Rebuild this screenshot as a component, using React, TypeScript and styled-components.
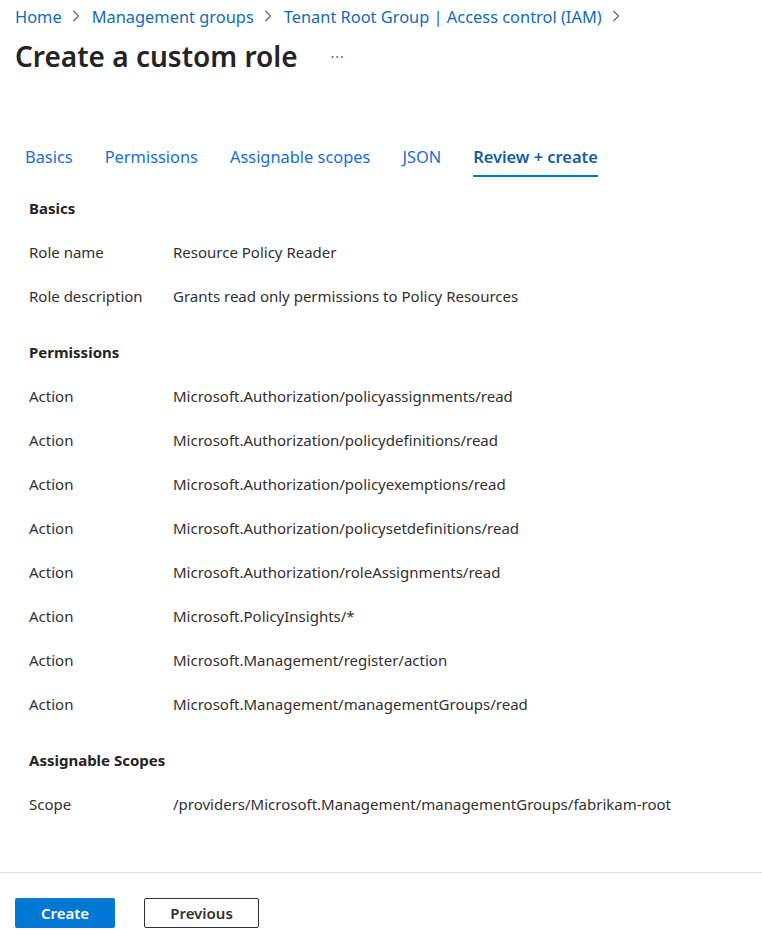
import React from 'react'
import styled, { createGlobalStyle } from 'styled-components'

const GlobalStyle = createGlobalStyle`
  html, body {
    margin: 0;
    padding: 0;
    background: #ffffff;
  }
  body {
    font-family: "Noto Sans", "Open Sans", sans-serif;
    color: #323130;
  }
`

const crumbs = ['Home', 'Management groups', 'Tenant Root Group | Access control (IAM)']
const tabs = ['Basics', 'Permissions', 'Assignable scopes', 'JSON', 'Review + create']

const sections = [
  {
    title: 'Basics',
    rows: [
      ['Role name', 'Resource Policy Reader'],
      ['Role description', 'Grants read only permissions to Policy Resources'],
    ],
  },
  {
    title: 'Permissions',
    rows: [
      ['Action', 'Microsoft.Authorization/policyassignments/read'],
      ['Action', 'Microsoft.Authorization/policydefinitions/read'],
      ['Action', 'Microsoft.Authorization/policyexemptions/read'],
      ['Action', 'Microsoft.Authorization/policysetdefinitions/read'],
      ['Action', 'Microsoft.Authorization/roleAssignments/read'],
      ['Action', 'Microsoft.PolicyInsights/*'],
      ['Action', 'Microsoft.Management/register/action'],
      ['Action', 'Microsoft.Management/managementGroups/read'],
    ],
  },
  {
    title: 'Assignable Scopes',
    rows: [['Scope', '/providers/Microsoft.Management/managementGroups/fabrikam-root']],
  },
]

const Chevron = () => (
  <svg width="8" height="12" viewBox="0 0 8 12">
    <path d="M1.5 1 L6.5 6 L1.5 11" fill="none" stroke="#605e5c" strokeWidth="1.1" />
  </svg>
)

const App = () => {
  return (
    <Page>
      <GlobalStyle />
      <Header>
        <Breadcrumb>
          {crumbs.map((c) => (
            <Crumb key={c}>
              <CrumbLink>{c}</CrumbLink>
              <Chevron />
            </Crumb>
          ))}
        </Breadcrumb>
        <TitleRow>
          <Title>Create a custom role</Title>
          <More>···</More>
        </TitleRow>
      </Header>

      <Tabs>
        {tabs.map((t, i) => (
          <Tab key={t} active={i === tabs.length - 1}>
            {t}
          </Tab>
        ))}
      </Tabs>

      <Content>
        {sections.map((s) => (
          <Section key={s.title}>
            <SectionTitle>{s.title}</SectionTitle>
            {s.rows.map(([label, value], i) => (
              <Row key={i}>
                <Label>{label}</Label>
                <Value>{value}</Value>
              </Row>
            ))}
          </Section>
        ))}
      </Content>

      <Footer>
        <PrimaryButton>Create</PrimaryButton>
        <SecondaryButton>Previous</SecondaryButton>
      </Footer>
    </Page>
  )
}

export default App

const Page = styled.div`
  width: 762px;
  height: 942px;
  display: flex;
  flex-direction: column;
  overflow: hidden;
`

const Header = styled.div`
  padding: 4px 15px 0;
  display: flex;
  flex-direction: column;
`

const Breadcrumb = styled.div`
  display: flex;
  align-items: center;
  height: 24px;
`

const Crumb = styled.div`
  display: flex;
  align-items: center;
  gap: 10px;
  margin-right: 12px;
`

const CrumbLink = styled.span`
  font-size: 16.4px;
  color: #0f6cbd;
`

const TitleRow = styled.div`
  display: flex;
  align-items: center;
  margin-top: 11px;
  height: 34px;
`

const Title = styled.h1`
  margin: 0;
  font-size: 28px;
  font-weight: 600;
  color: #242424;
`

const More = styled.span`
  margin-left: 33px;
  font-size: 14px;
  color: #605e5c;
  letter-spacing: 1px;
`

const Tabs = styled.div`
  display: flex;
  margin-top: 72px;
  padding-left: 9px;
`

const Tab = styled.div<{ active: boolean }>`
  padding: 0 16px;
  height: 32px;
  display: flex;
  align-items: flex-start;
  font-size: 16.4px;
  font-weight: ${(p) => (p.active ? 600 : 400)};
  color: ${(p) => (p.active ? '#115ea3' : '#1a6ddb')};
  position: relative;

  &::after {
    content: '';
    display: ${(p) => (p.active ? 'block' : 'none')};
    position: absolute;
    left: 16px;
    right: 16px;
    bottom: 0;
    height: 2px;
    background: #0078d4;
  }
`

const Content = styled.div`
  flex: 1;
  padding: 19px 29px 0;
  display: flex;
  flex-direction: column;
  gap: 12px;
`

const Section = styled.div`
  display: flex;
  flex-direction: column;
`

const SectionTitle = styled.div`
  font-size: 15px;
  font-weight: 700;
  height: 44px;
  line-height: 24px;
  color: #242424;
`

const Row = styled.div`
  display: flex;
  height: 44px;
  line-height: 24px;
  font-size: 15px;
`

const Label = styled.div`
  width: 144px;
  flex-shrink: 0;
  color: #323130;
`

const Value = styled.div`
  color: #323130;
`

const Footer = styled.div`
  border-top: 1px solid #e0e0e0;
  height: 70px;
  padding: 25px 15px 0;
  box-sizing: border-box;
  display: flex;
  gap: 29px;
  align-items: flex-start;
`

const PrimaryButton = styled.button`
  width: 100px;
  height: 30px;
  border: none;
  border-radius: 2px;
  background: #0078d4;
  color: #ffffff;
  font-family: inherit;
  font-size: 15px;
  font-weight: 600;
`

const SecondaryButton = styled.button`
  width: 115px;
  height: 30px;
  border: 1px solid #323130;
  border-radius: 2px;
  background: #ffffff;
  color: #323130;
  font-family: inherit;
  font-size: 15px;
  font-weight: 600;
`
